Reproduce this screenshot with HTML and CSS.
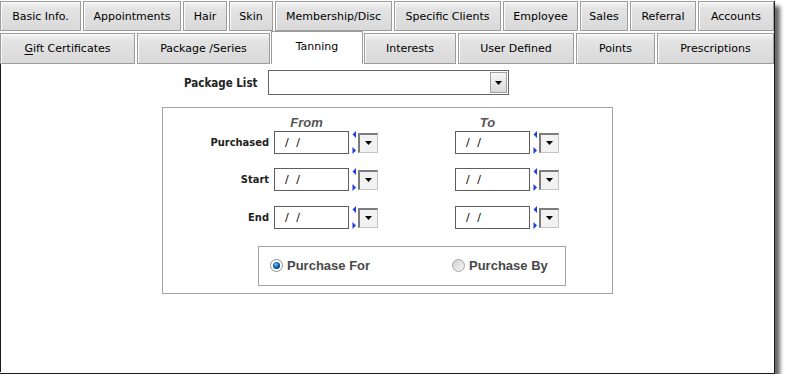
FILE: index.html
```html
<!DOCTYPE html>
<html>
<head>
<meta charset="utf-8">
<link rel="stylesheet" href="styles.css">
</head>
<body>
<div class="window">
  <div class="tabrow row1">
    <div class="tab t-basic">Basic Info.</div>
    <div class="tab t-appt">Appointments</div>
    <div class="tab t-hair">Hair</div>
    <div class="tab t-skin">Skin</div>
    <div class="tab t-memb">Membership/Disc</div>
    <div class="tab t-spec">Specific Clients</div>
    <div class="tab t-emp">Employee</div>
    <div class="tab t-sales">Sales</div>
    <div class="tab t-ref">Referral</div>
    <div class="tab t-acc">Accounts</div>
  </div>
  <div class="tabrow row2">
    <div class="tab t-gift"><u>G</u>ift Certificates</div>
    <div class="tab t-pkg">Package /Series</div>
    <div class="tab t-tan active">Tanning</div>
    <div class="tab t-int">Interests</div>
    <div class="tab t-user">User Defined</div>
    <div class="tab t-pts">Points</div>
    <div class="tab t-presc">Prescriptions</div>
  </div>
  <div class="panel">
    <div class="pkg-row">
      <span class="pkg-label">Package List</span>
      <div class="select">
        <span class="select-btn"><svg width="7" height="4" viewBox="0 0 7 4"><polygon points="0,0 7,0 3.5,4" fill="#000"/></svg></span>
      </div>
    </div>
    <div class="group">
      <div class="heads"><span class="head from">From</span><span class="head to">To</span></div>

      <div class="row">
        <span class="lbl">Purchased</span>
        <div class="field">
          <div class="date">/ /</div>
          <svg class="spin" width="5" height="23" viewBox="0 0 5 23"><polygon points="4,0 4,7 0.5,3.5" fill="#1f3fe0"/><polygon points="0.5,16 0.5,23 4,19.5" fill="#1f3fe0"/></svg>
          <div class="dbtn"><svg width="7" height="4" viewBox="0 0 7 4"><polygon points="0,0 7,0 3.5,4" fill="#000"/></svg></div>
        </div>
        <div class="field to-field">
          <div class="date">/ /</div>
          <svg class="spin" width="5" height="23" viewBox="0 0 5 23"><polygon points="4,0 4,7 0.5,3.5" fill="#1f3fe0"/><polygon points="0.5,16 0.5,23 4,19.5" fill="#1f3fe0"/></svg>
          <div class="dbtn"><svg width="7" height="4" viewBox="0 0 7 4"><polygon points="0,0 7,0 3.5,4" fill="#000"/></svg></div>
        </div>
      </div>

      <div class="row">
        <span class="lbl">Start</span>
        <div class="field">
          <div class="date">/ /</div>
          <svg class="spin" width="5" height="23" viewBox="0 0 5 23"><polygon points="4,0 4,7 0.5,3.5" fill="#1f3fe0"/><polygon points="0.5,16 0.5,23 4,19.5" fill="#1f3fe0"/></svg>
          <div class="dbtn"><svg width="7" height="4" viewBox="0 0 7 4"><polygon points="0,0 7,0 3.5,4" fill="#000"/></svg></div>
        </div>
        <div class="field to-field">
          <div class="date">/ /</div>
          <svg class="spin" width="5" height="23" viewBox="0 0 5 23"><polygon points="4,0 4,7 0.5,3.5" fill="#1f3fe0"/><polygon points="0.5,16 0.5,23 4,19.5" fill="#1f3fe0"/></svg>
          <div class="dbtn"><svg width="7" height="4" viewBox="0 0 7 4"><polygon points="0,0 7,0 3.5,4" fill="#000"/></svg></div>
        </div>
      </div>

      <div class="row r3">
        <span class="lbl">End</span>
        <div class="field">
          <div class="date">/ /</div>
          <svg class="spin" width="5" height="23" viewBox="0 0 5 23"><polygon points="4,0 4,7 0.5,3.5" fill="#1f3fe0"/><polygon points="0.5,16 0.5,23 4,19.5" fill="#1f3fe0"/></svg>
          <div class="dbtn"><svg width="7" height="4" viewBox="0 0 7 4"><polygon points="0,0 7,0 3.5,4" fill="#000"/></svg></div>
        </div>
        <div class="field to-field">
          <div class="date">/ /</div>
          <svg class="spin" width="5" height="23" viewBox="0 0 5 23"><polygon points="4,0 4,7 0.5,3.5" fill="#1f3fe0"/><polygon points="0.5,16 0.5,23 4,19.5" fill="#1f3fe0"/></svg>
          <div class="dbtn"><svg width="7" height="4" viewBox="0 0 7 4"><polygon points="0,0 7,0 3.5,4" fill="#000"/></svg></div>
        </div>
      </div>

      <div class="radios">
        <label class="radio first">
          <svg width="13" height="13" viewBox="0 0 13 13">
            <defs>
              <radialGradient id="dot" cx="40%" cy="35%" r="65%">
                <stop offset="0" stop-color="#7fc4f0"/>
                <stop offset="0.5" stop-color="#1e72c0"/>
                <stop offset="1" stop-color="#0a3f80"/>
              </radialGradient>
            </defs>
            <circle cx="6.5" cy="6.5" r="6" fill="#fff" stroke="#8e8e8e"/>
            <circle cx="6.5" cy="6.5" r="3.6" fill="url(#dot)"/>
          </svg>
          <span>Purchase For</span>
        </label>
        <label class="radio">
          <svg width="13" height="13" viewBox="0 0 13 13">
            <defs>
              <linearGradient id="off" x1="0" y1="0" x2="1" y2="1">
                <stop offset="0" stop-color="#cfcfcf"/>
                <stop offset="1" stop-color="#f7f7f7"/>
              </linearGradient>
            </defs>
            <circle cx="6.5" cy="6.5" r="6" fill="url(#off)" stroke="#a8a8a8"/>
          </svg>
          <span>Purchase By</span>
        </label>
      </div>
    </div>
  </div>
</div>
</body>
</html>
```

FILE: styles.css
```css
* { box-sizing: border-box; }

body {
  margin: 0;
  background: #fff;
  font-family: "DejaVu Sans", sans-serif;
  font-size: 11px;
  color: #000;
}

.window {
  width: 775px;
  height: 373px;
  border-right: 1px solid #1a1a1a;
  border-bottom: 1px solid #1a1a1a;
  box-shadow: 5px 5px 4px rgba(0, 0, 0, 0.6);
  background: #fff;
}

.tabrow {
  display: flex;
  gap: 2px;
  background: #fff;
}

.row1 {
  margin-top: 1px;
  height: 30px;
}

.row2 {
  margin-top: 2px;
  height: 31px;
  align-items: flex-end;
}

.tab {
  height: 100%;
  flex: none;
  display: flex;
  align-items: center;
  justify-content: center;
  border: 1px solid #9c9c9c;
  box-shadow: inset 1px 1px 0 #fafafa;
  background: linear-gradient(to bottom, #f4f4f4 0, #e3e3e3 25%, #d9d9d9 100%);
  white-space: nowrap;
}

.tab u { text-decoration: underline; text-underline-offset: 2px; }

.t-basic { width: 81px; }
.t-appt { width: 98px; }
.t-hair { width: 44px; }
.t-skin { width: 44px; }
.t-memb { width: 117px; }
.t-spec { width: 107px; }
.t-emp { width: 75px; }
.t-sales { width: 48px; }
.t-ref { width: 66px; }
.t-acc { width: 76px; }

.t-gift { width: 135px; }
.t-pkg { width: 133px; }
.t-tan { width: 92px; margin: 0 -1px; }
.t-int { width: 92px; }
.t-user { width: 116px; }
.t-pts { width: 79px; }
.t-presc { width: 117px; }

.tab.active {
  height: 33px;
  background: #fff;
  border-bottom: none;
  box-shadow: none;
  padding-bottom: 3px;
  position: relative;
}

.panel {
  height: 308px;
  border-left: 1px solid #1a1a1a;
  padding-top: 6px;
}

.pkg-row {
  display: flex;
  align-items: center;
  padding-left: 182px;
  height: 25px;
}

.pkg-label,
.lbl {
  font-family: "DejaVu Sans Condensed", "DejaVu Sans", sans-serif;
  font-stretch: condensed;
  font-weight: bold;
  font-size: 11px;
  color: #222;
}

.pkg-label {
  width: 78px;
  margin-left: 1px;
  text-align: left;
  font-size: 11.5px;
}

.select {
  margin-left: 6px;
  width: 241px;
  height: 25px;
  border: 1px solid #666;
  display: flex;
  justify-content: flex-end;
  padding: 1px 1px 1px 0;
}

.select-btn {
  width: 17px;
  height: 21px;
  border: 1px solid #a2a2a2;
  background: linear-gradient(to bottom, #f6f6f6, #dadada);
  display: flex;
  align-items: center;
  justify-content: center;
}

.group {
  margin-top: 12px;
  margin-left: 161px;
  width: 451px;
  height: 187px;
  border: 1px solid #a3a3a3;
}

.heads {
  display: flex;
  padding-top: 7px;
  height: 22px;
}

.head {
  width: 75px;
  text-align: center;
  font-family: "Liberation Sans", Arial, sans-serif;
  font-weight: bold;
  font-style: italic;
  font-size: 13px;
  line-height: 15px;
  color: #555;
}

.head.from { margin-left: 106px; }
.head.to { margin-left: 106px; }

.row {
  display: flex;
  align-items: center;
  height: 23px;
  margin-top: 1px;
}

.row + .row { margin-top: 14px; }
.row.r3 { margin-top: 15px; }

.lbl {
  width: 106px;
  text-align: right;
}

.field {
  display: flex;
  align-items: center;
  margin-left: 5px;
}

.field.to-field { margin-left: 77px; }

.date {
  width: 75px;
  height: 23px;
  border: 1px solid #5e5e5e;
  padding-left: 10px;
  line-height: 21px;
  font-size: 11px;
  letter-spacing: 2px;
  background: #fff;
}

.spin {
  margin-left: 3px;
  display: block;
}

.dbtn {
  margin-left: 1px;
  width: 20px;
  height: 20px;
  border-style: solid;
  border-width: 2px 1px 1px 2px;
  border-color: #7c7c7c #c4c4c4 #c4c4c4 #7c7c7c;
  background: #f2f2f2;
  display: flex;
  align-items: center;
  justify-content: center;
}

.radios {
  margin-top: 17px;
  margin-left: 95px;
  width: 308px;
  height: 40px;
  border: 1px solid #a3a3a3;
  display: flex;
  align-items: center;
  padding-left: 11px;
  padding-bottom: 1px;
}

.radio {
  display: flex;
  align-items: center;
  font-family: "Liberation Sans", Arial, sans-serif;
  font-weight: bold;
  font-size: 13px;
  color: #484848;
}

.radio.first { width: 182px; }

.radio svg {
  display: block;
  margin-right: 4px;
}
```
